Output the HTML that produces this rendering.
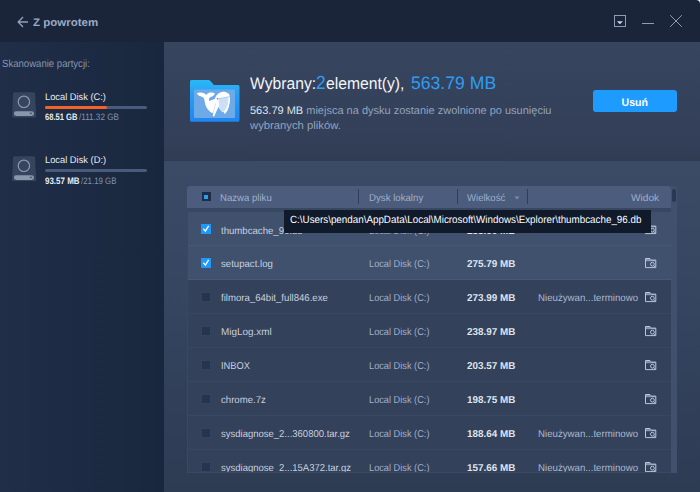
<!DOCTYPE html>
<html>
<head>
<meta charset="utf-8">
<style>
*{box-sizing:border-box;margin:0;padding:0}
html,body{width:700px;height:492px;overflow:hidden;background:#1a2539}
body{font-family:"Liberation Sans",sans-serif;text-rendering:geometricPrecision;position:relative;color:#c9d3e4;-webkit-font-smoothing:antialiased}
.abs{position:absolute;white-space:nowrap;transform-origin:0 0}
#titlebar{left:0;top:0;width:700px;height:42.3px;background:#1a2539}
#corner{left:690px;top:-10px;width:20px;height:20px;background:#fff}
#cornerfill{left:680px;top:0;width:20px;height:20px;background:#1a2539;border-top-right-radius:4px}
#sidebar{left:0;top:42.3px;width:163.8px;height:450px;background:linear-gradient(90deg,#202e47 0%,#1c2a43 50%,#19273e 100%)}
#top{left:163.8px;top:42.3px;width:536.2px;height:119.2px;background:linear-gradient(180deg,#37455e 0%,#333f58 85%,#303c54 100%)}
#bottom{left:163.8px;top:160px;width:536.2px;height:332px;background:linear-gradient(180deg,#3b4a65 0%,#3b4a65 0.5%,#364560 40%,#2d3b53 100%)}
#back{left:32.5px;top:16.3px;font-size:11px;font-weight:bold;color:#9aaac6;line-height:14px}
#scan{left:1.6px;top:57px;font-size:10.5px;color:#8596b3;line-height:14px}
.dname{font-size:9.6px;color:#e6ebf3;line-height:13px}
.dsize{font-size:9.3px;line-height:11px;color:#8393ae}
.dsize.b{color:#e6ebf3;font-weight:bold}
.bar{height:3px;width:102px;background:#4a5a7c;border-radius:1.5px}
.bar i{display:block;height:3px;background:#f4622a;border-radius:1.5px}
.tt{top:72.9px;font-size:16.6px;line-height:22px;height:22px;color:#f2f5fa}
.tt.b{color:#2d9df5}
.sub{left:250px;top:103.6px;font-size:11px;line-height:14.3px;color:#93a3be;transform:scaleX(1)}
.sub b{color:#dfe4ee;font-weight:normal}
#btn{left:593px;top:89.5px;width:84.4px;height:22.2px;overflow:hidden;background:#1e9bff;border-radius:3px;color:#fff;font-weight:bold;font-size:11px;line-height:26.6px;text-align:center}
#btn span{display:inline-block;transform:scaleX(.96)}
#thead{left:187px;top:186px;width:484px;height:22.5px;background:#4b5c7c;border-top-left-radius:3px;border-top-right-radius:3px}
#theadline{left:187px;top:208px;width:484px;height:4px;background:#384762}
.th{top:192.4px;font-size:10px;line-height:14px;color:#9fb0cc}
.sep{top:189.3px;width:1.4px;height:15.2px;background:#303d58;margin-left:-.2px}
#track{left:671px;top:186px;width:6px;height:287.2px;background:#42506d;border-top-right-radius:3px}
#thumb{left:671.7px;top:188.9px;width:4.6px;height:13.3px;background:#2b3853;border-radius:2.3px}
#rows{left:187px;top:212px;width:484px;height:261.2px;overflow:hidden;background:#33415b;border-bottom:1px solid #3a4862;border-left:1px solid #3a4963}
.row{position:relative;margin-left:-1px;padding-left:0;width:484px;height:34px;border-bottom:1px solid #394862;font-size:10px;line-height:38.8px;color:#c8d0de}
.row.sel{background:#40516e;border-bottom-color:#46577a}
.row span{position:absolute;top:0;white-space:nowrap;transform-origin:0 0}
.row.r1 span{top:1px}
.row .n{left:34px;transform:scaleX(.961)}
.row .d{left:182.4px;color:#a2b0c8;transform:scaleX(.922)}
.row .s{left:280px;font-weight:bold;color:#dfe5ee;transform:scaleX(.99)}
.row .t{left:350.7px;color:#a9b8d2;transform:scaleX(.968)}
.row .cb{left:14.1px;top:12.3px;width:9.9px;height:9.6px;background:#25344f;border:1px solid #34435e}
.row .cb.on{background:#1f98fc;border:none}
.row svg.ic{position:absolute;left:457.9px;top:12px}
#tip{left:284.3px;top:209.7px;width:366.4px;height:23px;background:#111a2b;color:#fff;font-size:10.5px;line-height:20.6px;padding-left:5.8px}
#tip span{display:inline-block;transform-origin:0 0;transform:scaleX(.935)}
</style>
</head>
<body>
<div class="abs" id="titlebar"></div>
<div class="abs" id="corner"></div>
<div class="abs" id="cornerfill"></div>
<div class="abs" id="sidebar"></div>
<div class="abs" id="bottom"></div>
<div class="abs" id="top"></div>

<svg class="abs" style="left:17px;top:15.5px" width="12" height="12" viewBox="0 0 12 12"><path d="M11 6H1.5M6 1L1.2 6L6 11" fill="none" stroke="#8e9fbc" stroke-width="1.4"/></svg>
<div class="abs" id="back" style="transform:scaleX(1.046)">Z powrotem</div>
<div class="abs" id="scan" style="transform:scaleX(.912)">Skanowanie partycji:</div>

<!-- disk C -->
<svg class="abs" style="left:12px;top:92px" width="24.2" height="25.8" viewBox="0 0 24.2 25.8"><path d="M2.6 0.2H21.6Q23 0.2 23.1 1.6L24.1 24Q24.2 25.6 22.6 25.6H1.6Q0 25.6 0.1 24L1.1 1.6Q1.2 0.2 2.6 0.2Z" fill="#36445e"/><circle cx="11.9" cy="9.8" r="5.7" fill="none" stroke="#8d99af" stroke-width="1.2"/><rect x="1.9" y="19.3" width="20.1" height="4.6" rx="2.3" fill="#8a96ac"/><path d="M17.6 20.7h2.6l-1.3 1.7z" fill="#36445e"/></svg>
<div class="abs dname" id="dc" style="left:45.1px;top:91.3px;transform:scaleX(.968)">Local Disk (C:)</div>
<div class="abs bar" style="left:45px;top:105.9px"><i style="width:62px"></i></div>
<div class="abs dsize b" id="dcsb" style="left:45px;top:111.9px;transform:scaleX(.814)">68.51 GB</div><div class="abs dsize" id="dcsr" style="left:78.8px;top:111.9px;transform:scaleX(.874)">/111.32 GB</div>
<!-- disk D -->
<svg class="abs" style="left:12px;top:155.6px" width="24.2" height="25.8" viewBox="0 0 24.2 25.8"><path d="M2.6 0.2H21.6Q23 0.2 23.1 1.6L24.1 24Q24.2 25.6 22.6 25.6H1.6Q0 25.6 0.1 24L1.1 1.6Q1.2 0.2 2.6 0.2Z" fill="#36445e"/><circle cx="11.9" cy="9.8" r="5.7" fill="none" stroke="#8d99af" stroke-width="1.2"/><rect x="1.9" y="19.3" width="20.1" height="4.6" rx="2.3" fill="#8a96ac"/><path d="M17.6 20.7h2.6l-1.3 1.7z" fill="#36445e"/></svg>
<div class="abs dname" id="dd" style="left:45.1px;top:154.3px;transform:scaleX(.971)">Local Disk (D:)</div>
<div class="abs bar" style="left:45px;top:169.4px"></div>
<div class="abs dsize b" id="ddsb" style="left:44.8px;top:175.8px;transform:scaleX(.856)">93.57 MB</div><div class="abs dsize" id="ddsr" style="left:81px;top:175.8px;transform:scaleX(.847)">/21.19 GB</div>

<!-- window controls -->
<svg class="abs" style="left:613px;top:14px" width="14" height="14" viewBox="0 0 14 14"><rect x="1.5" y="1.5" width="11" height="11" fill="none" stroke="#8c9bb6" stroke-width="1"/><path d="M3.9 7.3h6l-3 3z" fill="#ccd5e4"/></svg>
<div class="abs" style="left:642px;top:23px;width:12px;height:1px;background:#8c9bb6"></div>
<svg class="abs" style="left:669px;top:14px" width="14" height="14" viewBox="0 0 14 14"><path d="M1.2 1.2L12.8 12.8M12.8 1.2L1.2 12.8" stroke="#8c9bb6" stroke-width="1" fill="none"/></svg>

<!-- folder icon -->
<svg class="abs" id="folder" style="left:189px;top:79px" width="52" height="44" viewBox="0 0 52 44">
<defs><linearGradient id="fg" x1="0" y1="0" x2="0" y2="1"><stop offset="0" stop-color="#2bb8f7"/><stop offset="0.35" stop-color="#279ff4"/><stop offset="1" stop-color="#1f86ef"/></linearGradient></defs>
<path d="M1 2.5Q1 1 2.5 1H19.5Q20.5 1 21.2 1.8L24.5 5.5Q25 6 26 6H49Q50.5 6 50.5 7.5V41Q50.5 42.8 49 42.8H2.5Q1 42.8 1 41Z" fill="url(#fg)"/>
<rect x="5" y="10.5" width="41" height="28.5" rx="1" fill="#6eaae8"/>
<path d="M7.8 14.2C9.5 13.2 13 13.2 15.1 14.3C16 14.8 16.7 15.4 17.2 16C17.8 15 18.7 14.3 19.6 13.9C21.5 13.2 24 13.4 25.8 14.2C25.6 15.4 25 16.2 24.4 16.7C23.5 17.4 22.5 17.7 21.6 18.1C20.9 18.6 20.3 19.2 19.9 19.8C20 20.5 20.1 21.2 20.3 21.9C22 21.5 24 20.8 25.8 20.1C26.2 18.5 27 17 27.9 16C29 14.6 30.5 13.7 32 13.2C33.4 12.8 34.8 12.7 36.1 12.9C37.5 13.2 38.8 13.8 39.6 14.6C40.3 15.3 40.7 16.3 40.85 17.4C41.2 19.5 41 22 40.6 24.3C40.3 26.5 39.7 28.6 38.9 30.5C38 32.5 36.8 34 35.5 35C35.2 34 34.8 33.2 34.4 32.5L33.4 33.2C32.3 32.2 31.4 31 30.6 29.8L29.6 27.7C28 31 26.5 34.5 25.1 37.7L23.7 36.7C24 35.6 24.2 34.6 24.4 33.6L23 33.9C21.7 33.3 20.5 32.4 19.6 31.2C18.4 30 17.5 28.6 16.8 27C16.3 25.7 16 24.3 15.8 22.9C15.5 21.7 15.3 20.6 15.1 19.4C14.6 18.9 14 18.4 13.4 18C12.3 17.5 11 17.1 9.9 16.7C9 16 8.3 15.1 7.8 14.2Z" fill="#fff"/>
<path d="M29.6 20.1L39.3 18.3C39.4 21 39.2 23 38.9 25C38.4 27.2 37.5 29 36.5 30.5C35.6 31.6 34.6 32.4 33.7 32.9C32.4 32 31.3 31 30.6 29.8C30 27 29.7 23.5 29.6 20.1Z" fill="#cbdff5"/>
<path d="M28.5 19.8L40.8 17.7" stroke="#5fa1e6" stroke-width="0.5" fill="none"/>
<path d="M26.6 24.5C25.8 28 24.9 31 24.3 33.5" stroke="#9cc4ee" stroke-width="0.5" fill="none"/>
<circle cx="28.5" cy="19.8" r="0.75" fill="#3a86dc"/>
</svg>

<div class="abs tt" id="t1" style="left:250.3px;transform:scaleX(.945)">Wybrany:</div>
<div class="abs tt b" id="t2" style="left:316.2px;top:73px;font-size:19px;transform:scaleX(.92)">2</div>
<div class="abs tt" id="t3" style="left:326.2px;transform:scaleX(.945)">element(y),</div>
<div class="abs tt b" id="t4" style="left:410.6px;top:71.9px;font-size:18px;transform:scaleX(.978)">563.79 MB</div>
<div class="abs sub" id="sub"><b>563.79 MB</b> miejsca na dysku zostanie zwolnione po usunięciu</div>
<div class="abs sub" id="sub2" style="top:118.6px;transform:scaleX(1.025)">wybranych plików.</div>
<div class="abs" id="btn"><span>Usuń</span></div>

<!-- table -->
<div class="abs" id="thead"></div>
<div class="abs" id="theadline"></div>
<div class="abs" style="left:201.5px;top:192.2px;width:9.2px;height:9.2px;background:#1f2c46"></div>
<div class="abs" style="left:203.9px;top:194.6px;width:4.5px;height:4.5px;background:#22a0ff"></div>
<div class="abs th" id="h1" style="left:220px;transform:scaleX(.96)">Nazwa pliku</div>
<div class="abs sep" style="left:358px"></div>
<div class="abs th" id="h2" style="left:369.2px;transform:scaleX(.966)">Dysk lokalny</div>
<div class="abs sep" style="left:457px"></div>
<div class="abs th" id="h3" style="left:467.2px;transform:scaleX(.955)">Wielkość</div>
<svg class="abs" style="left:514px;top:196px" width="6" height="4" viewBox="0 0 6 4"><path d="M0.5 0.5h5L3 3.5z" fill="#7d8eac"/></svg>
<div class="abs sep" style="left:527px"></div>
<div class="abs th" id="h4" style="left:631px;transform:scaleX(1.01)">Widok</div>
<div class="abs" id="track"></div>
<div class="abs" id="thumb"></div>

<div class="abs" id="rows">
<div class="row sel r1"><div class="abs cb on"><svg width="10" height="10" viewBox="0 0 10 10" style="display:block"><path d="M2.4 4.8L4.4 7.1L7.6 1.9" fill="none" stroke="#fff" stroke-width="1.3"/></svg></div><span class="n">thumbcache_96.db</span><span class="d">Local Disk (C:)</span><span class="s">288.00 MB</span><svg class="ic" width="12" height="11" viewBox="0 0 12 11"><use href="#vi"/></svg></div>
<div class="row sel"><div class="abs cb on"><svg width="10" height="10" viewBox="0 0 10 10" style="display:block"><path d="M2.4 4.8L4.4 7.1L7.6 1.9" fill="none" stroke="#fff" stroke-width="1.3"/></svg></div><span class="n">setupact.log</span><span class="d">Local Disk (C:)</span><span class="s">275.79 MB</span><svg class="ic" width="12" height="11" viewBox="0 0 12 11"><use href="#vi"/></svg></div>
<div class="row"><div class="abs cb"></div><span class="n">filmora_64bit_full846.exe</span><span class="d">Local Disk (C:)</span><span class="s">273.99 MB</span><span class="t">Nieużywan...terminowo</span><svg class="ic" width="12" height="11" viewBox="0 0 12 11"><use href="#vi"/></svg></div>
<div class="row"><div class="abs cb"></div><span class="n" style="transform:scaleX(.99)">MigLog.xml</span><span class="d">Local Disk (C:)</span><span class="s">238.97 MB</span><svg class="ic" width="12" height="11" viewBox="0 0 12 11"><use href="#vi"/></svg></div>
<div class="row"><div class="abs cb"></div><span class="n" style="transform:scaleX(.93)">INBOX</span><span class="d">Local Disk (C:)</span><span class="s">203.57 MB</span><svg class="ic" width="12" height="11" viewBox="0 0 12 11"><use href="#vi"/></svg></div>
<div class="row"><div class="abs cb"></div><span class="n">chrome.7z</span><span class="d">Local Disk (C:)</span><span class="s">198.75 MB</span><svg class="ic" width="12" height="11" viewBox="0 0 12 11"><use href="#vi"/></svg></div>
<div class="row"><div class="abs cb"></div><span class="n" style="transform:scaleX(.95)">sysdiagnose_2...360800.tar.gz</span><span class="d">Local Disk (C:)</span><span class="s">188.64 MB</span><span class="t">Nieużywan...terminowo</span><svg class="ic" width="12" height="11" viewBox="0 0 12 11"><use href="#vi"/></svg></div>
<div class="row"><div class="abs cb"></div><span class="n" style="transform:scaleX(.95)">sysdiagnose_2...15A372.tar.gz</span><span class="d">Local Disk (C:)</span><span class="s">157.66 MB</span><span class="t">Nieużywan...terminowo</span><svg class="ic" width="12" height="11" viewBox="0 0 12 11"><use href="#vi"/></svg></div>
</div>

<svg width="0" height="0" style="position:absolute"><defs><g id="vi" fill="none" stroke="#b9c6dc" stroke-width="1"><path d="M0.5 0.5H5L6.3 2.1H10.8V9.6H0.5Z"/><path d="M0.5 2.7H10.5" stroke-opacity=".8"/><path d="M0.8 1.5H5.2" stroke-opacity=".6"/><circle cx="7.4" cy="6.2" r="1.9" fill="none"/><path d="M8.8 7.6L10.2 9"/></g></defs></svg>

<div class="abs" id="tip"><span id="tiptx">C:\Users\pendan\AppData\Local\Microsoft\Windows\Explorer\thumbcache_96.db</span></div>
</body>
</html>
